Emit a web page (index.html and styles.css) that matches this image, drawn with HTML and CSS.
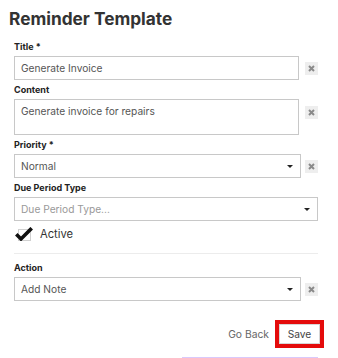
FILE: index.html
```html
<!DOCTYPE html>
<html lang="en">
<head>
<meta charset="utf-8">
<title>Reminder Template</title>
<link rel="stylesheet" href="styles.css">
</head>
<body>
<div class="page">
  <h1 class="heading">Reminder Template</h1>
  <div class="form">
    <div class="field">
      <div class="label">Title *</div>
      <div class="row">
        <div class="control w-input">Generate Invoice</div>
        <span class="clear"><svg viewBox="0 0 13 13" width="13" height="13"><path d="M4 4 L9 9 M9 4 L4 9" stroke="#8a8a8a" stroke-width="2" stroke-linecap="butt"/></svg></span>
      </div>
    </div>
    <div class="field">
      <div class="label">Content</div>
      <div class="row row-top">
        <div class="control area w-input">Generate invoice for repairs</div>
        <span class="clear clear-area"><svg viewBox="0 0 13 13" width="13" height="13"><path d="M4 4 L9 9 M9 4 L4 9" stroke="#8a8a8a" stroke-width="2"/></svg></span>
      </div>
    </div>
    <div class="field">
      <div class="label">Priority *</div>
      <div class="row">
        <div class="control select w-select"><span>Normal</span><span class="caret"></span></div>
        <span class="clear clear-select"><svg viewBox="0 0 13 13" width="13" height="13"><path d="M4 4 L9 9 M9 4 L4 9" stroke="#8a8a8a" stroke-width="2"/></svg></span>
      </div>
    </div>
    <div class="field">
      <div class="label">Due Period Type</div>
      <div class="row">
        <div class="control select w-full"><span class="placeholder">Due Period Type...</span><span class="caret"></span></div>
      </div>
    </div>
    <div class="check-row">
      <svg class="check" viewBox="0 0 18 14" width="18" height="14">
        <rect x="3.5" y="2.5" width="12" height="11" fill="none" stroke="#d0d0d0" stroke-width="1"/>
        <path d="M1.3 7.2 L6 11.9 L16.7 1.2" fill="none" stroke="#111" stroke-width="3.6" stroke-linejoin="miter"/>
      </svg>
      <span class="check-label">Active</span>
    </div>
    <div class="divider"></div>
    <div class="field">
      <div class="label">Action</div>
      <div class="row">
        <div class="control select w-select"><span>Add Note</span><span class="caret"></span></div>
        <span class="clear clear-select"><svg viewBox="0 0 13 13" width="13" height="13"><path d="M4 4 L9 9 M9 4 L4 9" stroke="#8a8a8a" stroke-width="2"/></svg></span>
      </div>
    </div>
  </div>
  <div class="actions">
    <span class="back">Go Back</span>
    <span class="save">Save</span>
  </div>
  <div class="foot"><div class="foot-line"></div></div>
</div>
</body>
</html>
```
FILE: styles.css
```css
html, body {
  margin: 0;
  padding: 0;
  background: #fff;
}
body {
  font-family: Inter, "Noto Sans", sans-serif;
  color: #333;
  width: 338px;
  height: 358px;
  overflow: hidden;
}
.page {
  display: flex;
  flex-direction: column;
}
.heading {
  margin: 0;
  padding: 9px 0 0 9px;
  font-size: 17.3px;
  line-height: 20px;
  font-weight: 700;
  color: #333;
}
.form {
  display: flex;
  flex-direction: column;
  padding: 11px 0 0 14px;
}
.field {
  display: flex;
  flex-direction: column;
  margin-bottom: 3px;
}
.label {
  font-size: 9px;
  font-weight: 700;
  line-height: 14px;
  margin-bottom: 2px;
  color: #222;
}
.row {
  display: flex;
  align-items: center;
}
.row-top {
  align-items: flex-start;
}
.control {
  box-sizing: border-box;
  height: 24px;
  border: 1px solid #c8c8c8;
  padding: 0 6px;
  font-size: 10.2px;
  line-height: 22px;
  color: #555;
  background: #fff;
}
.area {
  height: 36px;
  line-height: 14px;
  padding-top: 4px;
}
.select {
  display: flex;
  justify-content: space-between;
  align-items: center;
}
.w-input { width: 285px; }
.w-select { width: 287px; }
.w-full { width: 304px; }
.placeholder { color: #999; }
.caret {
  width: 0;
  height: 0;
  border-left: 3.5px solid transparent;
  border-right: 3.5px solid transparent;
  border-top: 3.5px solid #222;
  margin-right: 1px;
}
.clear {
  display: flex;
  width: 13px;
  height: 13px;
  margin-left: 6px;
  background: #eeeeee;
}
.clear-area { margin-top: 7px; }
.clear-select { margin-left: 4px; }
.check-row {
  display: flex;
  align-items: center;
  height: 20px;
  padding-left: 1px;
}
.check { display: block; }
.check-label {
  margin-left: 7px;
  font-size: 11.2px;
  color: #333;
}
.divider {
  width: 304px;
  height: 1px;
  background: #ececec;
  margin: 9px 0 7px;
}
.actions {
  display: flex;
  justify-content: flex-end;
  align-items: center;
  margin-top: 20px;
  padding-right: 18px;
}
.back {
  font-size: 10.3px;
  color: #666;
  margin-right: 10px;
}
.save {
  box-sizing: border-box;
  width: 41px;
  height: 20px;
  border: 1px solid #d6d6d6;
  outline: 4px solid #e40b0b;
  display: flex;
  align-items: center;
  justify-content: center;
  font-size: 10.2px;
  color: #444;
}
.foot {
  display: flex;
  justify-content: flex-end;
  padding-right: 20px;
  margin-top: 13px;
}
.foot-line {
  width: 136px;
  height: 2px;
  background: #d9c9fb;
}
```
